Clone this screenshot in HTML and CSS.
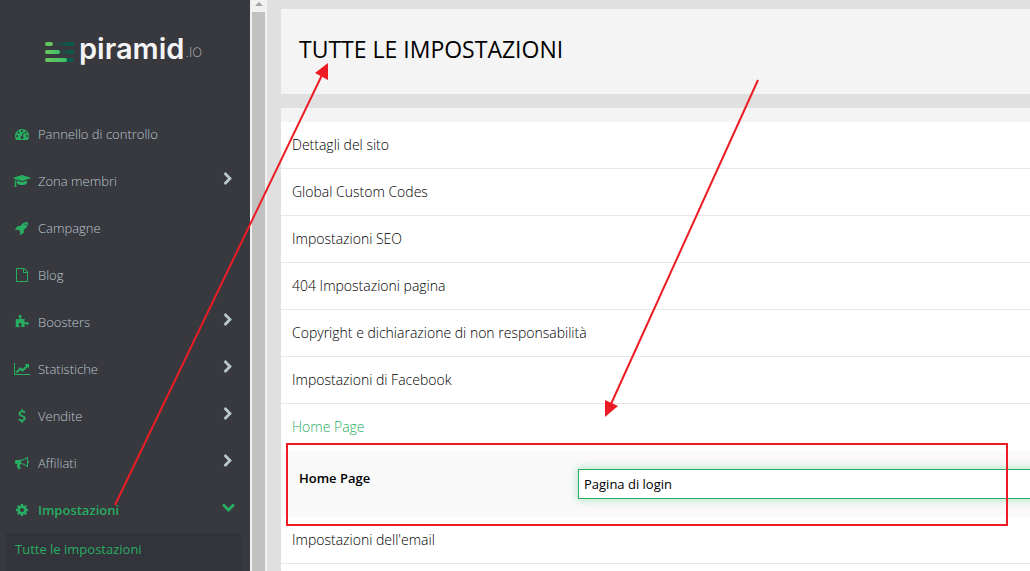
FILE: index.html
```html
<!DOCTYPE html>
<html lang="it">
<head>
<meta charset="utf-8">
<meta name="viewport" content="width=device-width, initial-scale=1">
<title>Tutte le impostazioni</title>
<link rel="stylesheet" href="styles.css">
</head>
<body>
<div class="app">
  <aside class="sidebar">
    <a class="logo" href="#">
      <svg class="logo-mark" width="30" height="22" viewBox="0 0 30 22" aria-hidden="true">
        <defs>
          <linearGradient id="bright" x1="0" x2="1"><stop offset="0" stop-color="#6cc95f"/><stop offset="1" stop-color="#3cc069"/></linearGradient>
          <linearGradient id="deep" x1="0" x2="1"><stop offset="0" stop-color="#38393f"/><stop offset="1" stop-color="#03604f"/></linearGradient>
        </defs>
        <rect x="8" y="1" width="21" height="4" rx="2" fill="url(#deep)"/>
        <rect x="13" y="9" width="16" height="4" rx="2" fill="url(#deep)"/>
        <rect x="20" y="17" width="9" height="4" rx="2" fill="#0b5a4c"/>
        <rect x="0" y="1" width="8" height="4" rx="2" fill="#62c660"/>
        <rect x="0" y="9" width="15" height="4" rx="2" fill="url(#bright)"/>
        <rect x="0" y="17" width="22" height="4" rx="2" fill="url(#bright)"/>
      </svg>
      <span class="logo-name">piramid</span><span class="logo-suffix">.IO</span>
    </a>
    <nav class="menu">
      <a class="item" href="#"><svg class="icon" viewBox="0 0 1792 1792"><path d="M384 1152q0-53-37.500-90.500t-90.500-37.500-90.500 37.500-37.500 90.500 37.500 90.500 90.500 37.500 90.500-37.500 37.500-90.500zm192-448q0-53-37.500-90.500t-90.500-37.500-90.500 37.500-37.500 90.500 37.500 90.500 90.500 37.500 90.500-37.500 37.500-90.500zm428 481l101-382q6-26-7.500-48.500t-38.500-29.500-48 6.500-30 39.500l-101 382q-60 5-107 43.500t-63 98.500q-20 77 20 146t117 89 146-20 89-117q16-60-6-117t-72-91zm660-33q0-53-37.500-90.500t-90.500-37.500-90.500 37.500-37.500 90.500 37.500 90.500 90.500 37.500 90.500-37.500 37.500-90.500zm-640-640q0-53-37.500-90.500t-90.500-37.500-90.500 37.500-37.500 90.500 37.500 90.500 90.500 37.500 90.500-37.500 37.500-90.500zm448 192q0-53-37.500-90.500t-90.500-37.500-90.500 37.500-37.500 90.500 37.500 90.500 90.500 37.500 90.500-37.500 37.500-90.500zm320 448q0 261-141 483-19 29-54 29h-1402q-35 0-54-29-141-221-141-483 0-182 71-348t191-286 286-191 348-71 348 71 286 191 191 286 71 348z"/></svg><span class="label">Pannello di controllo</span></a>
      <a class="item" href="#"><svg class="icon icon-wide" viewBox="0 0 2304 1792"><path d="M1774 836l18 316q4 69-82 128t-235 93.500-323 34.500-323-34.500-235-93.500-82-128l18-316 574 181q22 7 48 7t48-7zm530-324q0 23-22 31l-1120 352q-4 1-10 1t-10-1l-652-206q-43 34-71 111.500t-34 178.500q63 36 63 109 0 69-58 107l58 433q2 14-8 25-9 11-24 11h-192q-15 0-24-11-10-11-8-25l58-433q-58-38-58-107 0-73 65-111 11-207 98-330l-333-104q-22-8-22-31t22-31l1120-352q4-1 10-1t10 1l1120 352q22 8 22 31z"/></svg><span class="label">Zona membri</span><svg class="chevron" viewBox="0 0 1792 1792"><use href="#chevron-right"/></svg></a>
      <a class="item" href="#"><svg class="icon" viewBox="0 0 1792 1792"><path d="M1440 448q0-40-28-68t-68-28-68 28-28 68 28 68 68 28 68-28 28-68zm224-288q0 249-75.500 430.500t-253.500 360.500q-81 80-195 176l-20 379q-2 16-16 26l-384 224q-7 4-16 4-12 0-23-9l-64-64q-13-14-8-32l85-276-281-281-276 85q-3 1-9 1-14 0-23-9l-64-64q-17-19-5-39l224-384q10-14 26-16l379-20q96-114 176-195 188-187 358-258t431-71q14 0 24 9.500t10 22.500z"/></svg><span class="label">Campagne</span></a>
      <a class="item" href="#"><svg class="icon" viewBox="0 0 1792 1792"><path d="M1596 380q28 28 48 76t20 88v1152q0 40-28 68t-68 28h-1344q-40 0-68-28t-28-68v-1600q0-40 28-68t68-28h896q40 0 88 20t76 48zm-444-244v376h376q-10-29-22-41l-313-313q-12-12-41-22zm384 1528v-1024h-416q-40 0-68-28t-28-68v-416h-768v1536h1280z"/></svg><span class="label">Blog</span></a>
      <a class="item" href="#"><svg class="icon" viewBox="0 0 1792 1792"><path d="M1755 1083q0 81-44.500 135t-123.500 54q-41 0-77.500-17.500t-59-38-56.500-38-71-17.500q-110 0-110 124 0 39 16 115t15 115v5q-22 0-33 1-34 3-97.500 11.500t-115.500 13.500-98 5q-61 0-103-26.500t-42-83.500q0-37 17.500-71t38-56.500 38-59 17.500-77.500q0-79-54-123.500t-135-44.500q-84 0-143 45.500t-59 127.500q0 43 15 83t33.500 64.500 33.500 53 15 50.500q0 45-46 89-37 35-117 35-95 0-245-24-9-2-27.500-4t-27.500-4l-13-2q-1 0-3-1-2 0-2-1v-1024q2 1 17.500 3.500t34 5 21.500 3.500q150 24 245 24 80 0 117-35 46-44 46-89 0-22-15-50.500t-33.500-53-33.500-64.500-15-83q0-82 59-127.500t144-45.500q80 0 134 44.500t54 123.500q0 41-17.500 77.500t-38 59-38 56.500-17.500 71q0 57 42 83.500t103 26.500q64 0 180-15t163-17v2q-1 2-3.500 17.500t-5 34-3.500 21.500q-24 150-24 245 0 80 35 117 44 46 89 46 22 0 50.500-15t53-33.500 64.500-33.500 83-15q82 0 127.500 59t45.500 143z"/></svg><span class="label">Boosters</span><svg class="chevron" viewBox="0 0 1792 1792"><use href="#chevron-right"/></svg></a>
      <a class="item" href="#"><svg class="icon icon-chart" viewBox="0 0 2048 1792"><path d="M2048 1536v128h-2048v-1536h128v1408h1920zm-128-1248v435q0 21-19.500 29.500t-35.500-7.500l-121-121-633 633q-10 10-23 10t-23-10l-233-233-416 416-192-192 585-585q10-10 23-10t23 10l233 233 464-464-121-121q-16-16-7.500-35.500t29.500-19.500h435q14 0 23 9t9 23z"/></svg><span class="label">Statistiche</span><svg class="chevron" viewBox="0 0 1792 1792"><use href="#chevron-right"/></svg></a>
      <a class="item" href="#"><svg class="icon" viewBox="0 0 1792 1792"><path d="M1362 1185q0 153-99.500 263.500t-258.500 136.500v175q0 14-9 23t-23 9h-135q-13 0-22.500-9.500t-9.500-22.500v-175q-66-9-127.500-31t-101.500-44.500-74-48-46.500-37.500-17.500-18q-17-21-2-41l103-135q7-10 23-12 15-2 24 9l2 2q113 99 243 125 37 8 74 8 81 0 142.500-43t61.500-122q0-28-15-53t-33.500-42-58.500-37.500-66-32-80-32.500q-39-16-61.500-25t-61.500-26.500-62.500-31-56.500-35.500-53.500-42.500-43.500-49-35.500-58-21-66.500-8.500-78q0-138 98-242t255-134v-180q0-13 9.500-22.500t22.500-9.500h135q14 0 23 9t9 23v176q57 6 110.500 23t87 33.500 63.500 37.500 39 29 15 14q17 18 5 38l-81 146q-8 15-23 16-14 3-27-7-3-3-14.500-12t-39-26.500-58.500-32-74.500-26-85.500-11.500q-95 0-155 43t-60 111q0 26 8.500 48t29.500 41.500 39.500 33 56 31 60.500 27 70 27.500q53 20 81 31.500t76 35 75.500 42.500 62 50 53 63.500 31.500 76.500 13 94z"/></svg><span class="label">Vendite</span><svg class="chevron" viewBox="0 0 1792 1792"><use href="#chevron-right"/></svg></a>
      <a class="item" href="#"><svg class="icon" viewBox="0 0 1792 1792"><path d="M1664 640q53 0 90.500 37.500t37.500 90.500-37.500 90.500-90.500 37.500v384q0 52-38 90t-90 38q-417-347-812-380-58 19-91 66t-31 100.500 40 92.500q-20 33-23 65.500t6 58 33.500 55 48 50 61.500 50.500q-29 58-111.500 83t-168.500 11.500-132-55.500q-7-23-29.500-87.500t-32-94.500-23-89-15-101 3.500-98.500 22-110.500h-122q-66 0-113-47t-47-113v-192q0-66 47-113t113-47h480q435 0 896-384 52 0 90 38t38 90v384zm-128 604v-954q-394 302-768 343v270q377 42 768 341z"/></svg><span class="label">Affiliati</span><svg class="chevron" viewBox="0 0 1792 1792"><use href="#chevron-right"/></svg></a>
      <a class="item item-active" href="#"><svg class="icon" viewBox="0 0 1792 1792"><path d="M1152 896q0-106-75-181t-181-75-181 75-75 181 75 181 181 75 181-75 75-181zm512-109v222q0 12-8 23t-20 13l-185 28q-19 54-39 91 35 50 107 138 10 12 10 25t-9 23q-27 37-99 108t-94 71q-12 0-26-9l-138-108q-44 23-91 38-16 136-29 186-7 28-36 28h-222q-14 0-24.500-8.500t-11.500-21.500l-28-184q-49-16-90-37l-141 107q-10 9-25 9-14 0-25-11-126-114-165-168-7-10-7-23 0-12 8-23 15-21 51-66.500t54-70.500q-27-50-41-99l-183-27q-13-2-21-12.500t-8-23.500v-222q0-12 8-23t19-13l186-28q14-46 39-92-40-57-107-138-10-12-10-24 0-10 9-23 26-36 98.500-107.500t94.500-71.500q13 0 26 10l138 107q44-23 91-38 16-136 29-186 7-28 36-28h222q14 0 24.500 8.500t11.500 21.500l28 184q49 16 90 37l142-107q9-9 24-9 13 0 25 10 129 119 165 170 7 8 7 22 0 12-8 23-15 21-51 66.500t-54 70.500q26 50 41 98l183 28q13 2 21 12.500t8 23.500z"/></svg><span class="label">Impostazioni</span><svg class="chevron" viewBox="0 0 1792 1792"><use href="#chevron-right" transform="rotate(90 896 896)"/></svg></a>
      <div class="submenu"><a class="subitem" href="#">Tutte le impostazioni</a></div>
    </nav>
  </aside>
  <div class="scrollbar" aria-hidden="true">
    <svg class="scroll-up" width="8" height="4" viewBox="0 0 8 4"><path d="M4 0l4 4H0z"/></svg>
    <div class="scroll-thumb"></div>
  </div>
  <main class="content">
    <header class="title-card"><h1 class="title">TUTTE LE IMPOSTAZIONI</h1></header>
    <section class="settings">
      <a class="row" href="#">Dettagli del sito</a>
      <a class="row" href="#">Global Custom Codes</a>
      <a class="row" href="#">Impostazioni SEO</a>
      <a class="row" href="#">404 Impostazioni pagina</a>
      <a class="row" href="#">Copyright e dichiarazione di non responsabilità</a>
      <a class="row" href="#">Impostazioni di Facebook</a>
      <a class="row row-open" href="#">Home Page</a>
      <div class="field">
        <label class="field-label" for="home-page">Home Page</label>
        <select class="field-select" id="home-page"><option>Pagina di login</option></select>
      </div>
      <a class="row" href="#">Impostazioni dell'email</a>
    </section>
  </main>
</div>
<svg class="annotations" width="1030" height="571" viewBox="0 0 1030 571" aria-hidden="true">
  <defs><path id="chevron-right" d="M1363 877l-742 742q-19 19-45 19t-45-19l-166-166q-19-19-19-45t19-45l531-531-531-531q-19-19-19-45t19-45l166-166q19-19 45-19t45 19l742 742q19 19 19 45t-19 45z"/></defs>
  <path class="mark-line" d="M115 505L322 75M758 80L611 404M287 444H1007V525H287Z"/>
  <path class="mark-head" d="M328 63L315 73L328 80ZM605 417V400L618 406Z"/>
</svg>
</body>
</html>
```

FILE: styles.css
```css
* {
  box-sizing: border-box;
}

body {
  margin: 0;
  overflow: hidden;
  background: #e0e0e0;
  color: #000;
  font: 14px/20px "Open Sans", "Noto Sans", sans-serif;
}

a {
  color: inherit;
  text-decoration: none;
}

.app {
  display: grid;
  grid-template-columns: 250px 17px minmax(0, 1fr);
  height: 100vh;
  overflow: hidden;
}

.sidebar {
  overflow: hidden;
  background: #38383f;
  color: #b8c7ce;
}

.logo {
  display: flex;
  align-items: center;
  height: 110px;
  padding: 0 0 12px 45px;
  color: #f4f4f4;
  font-family: Inter, sans-serif;
}

.logo-mark {
  margin: 6px 4px 0 0;
}

.logo-name {
  font-size: 29px;
  font-weight: 600;
  line-height: 32px;
}

.logo-suffix {
  padding: 6px 0 0 1px;
  color: #c4c4c6;
  font-size: 13px;
  font-weight: 200;
}

.item {
  display: flex;
  align-items: center;
  gap: 7px;
  height: 47px;
  padding: 0 15px 0 13px;
  font-size: 13px;
  font-weight: 300;
}

.icon {
  width: 18px;
  height: 14px;
  fill: #27ae60;
}

.label {
  flex: 1;
}

.chevron {
  width: 14px;
  height: 14px;
  margin-bottom: 4px;
  fill: #b8c7ce;
}

.item-active {
  color: #27ae60;
  font-weight: 600;
}

.item-active .chevron {
  fill: #27ae60;
}

.submenu {
  margin: 0 9px 0 6px;
  background: #33333c;
}

.subitem {
  display: block;
  padding: 6px 9px 12px;
  color: #27ae60;
  font-size: 13px;
}

.scrollbar {
  display: flex;
  flex-direction: column;
  align-items: center;
  gap: 6px;
  padding-top: 2px;
  background: #f1f1f1;
}

.scroll-up {
  fill: #a3a3a3;
}

.scroll-thumb {
  flex: 1;
  width: 13px;
  background: #c1c1c1;
}

.content {
  display: flex;
  flex-direction: column;
  gap: 14px;
  padding: 9px 0 0 14px;
  overflow: hidden;
}

.title-card {
  padding: 22px 18px 27px;
  background: #f4f4f4;
}

.title {
  margin: 0;
  font-size: 23px;
  font-weight: 500;
  line-height: 36px;
}

.settings {
  flex: 1;
  border-top: 14px solid #f4f4f4;
  background: #fff;
}

.row {
  display: block;
  padding: 13px 11px;
  border-bottom: 1px solid #e7e7e7;
  font-weight: 300;
}

.row-open {
  border-bottom-color: transparent;
  color: #27ae60;
}

.field {
  display: flex;
  padding: 18px 0 18px 18px;
  background: #f9f9f9;
}

.field-label {
  width: 279px;
  font-size: 13px;
  font-weight: 600;
  line-height: 18px;
}

.field-select {
  flex: 1;
  height: 30px;
  margin-right: -20px;
  padding: 0 5px;
  border: 1px solid #27ae60;
  border-radius: 0;
  outline: 0;
  background: #fff;
  box-shadow: 0 0 10px rgba(39, 174, 96, 0.4);
  color: #000;
  font: inherit;
  font-size: 13px;
  appearance: none;
}

.annotations {
  position: absolute;
  top: 0;
  left: 0;
  pointer-events: none;
}

.mark-line {
  fill: none;
  stroke: #ed1c24;
  stroke-width: 2;
}

.mark-head {
  fill: #ed1c24;
}
```
